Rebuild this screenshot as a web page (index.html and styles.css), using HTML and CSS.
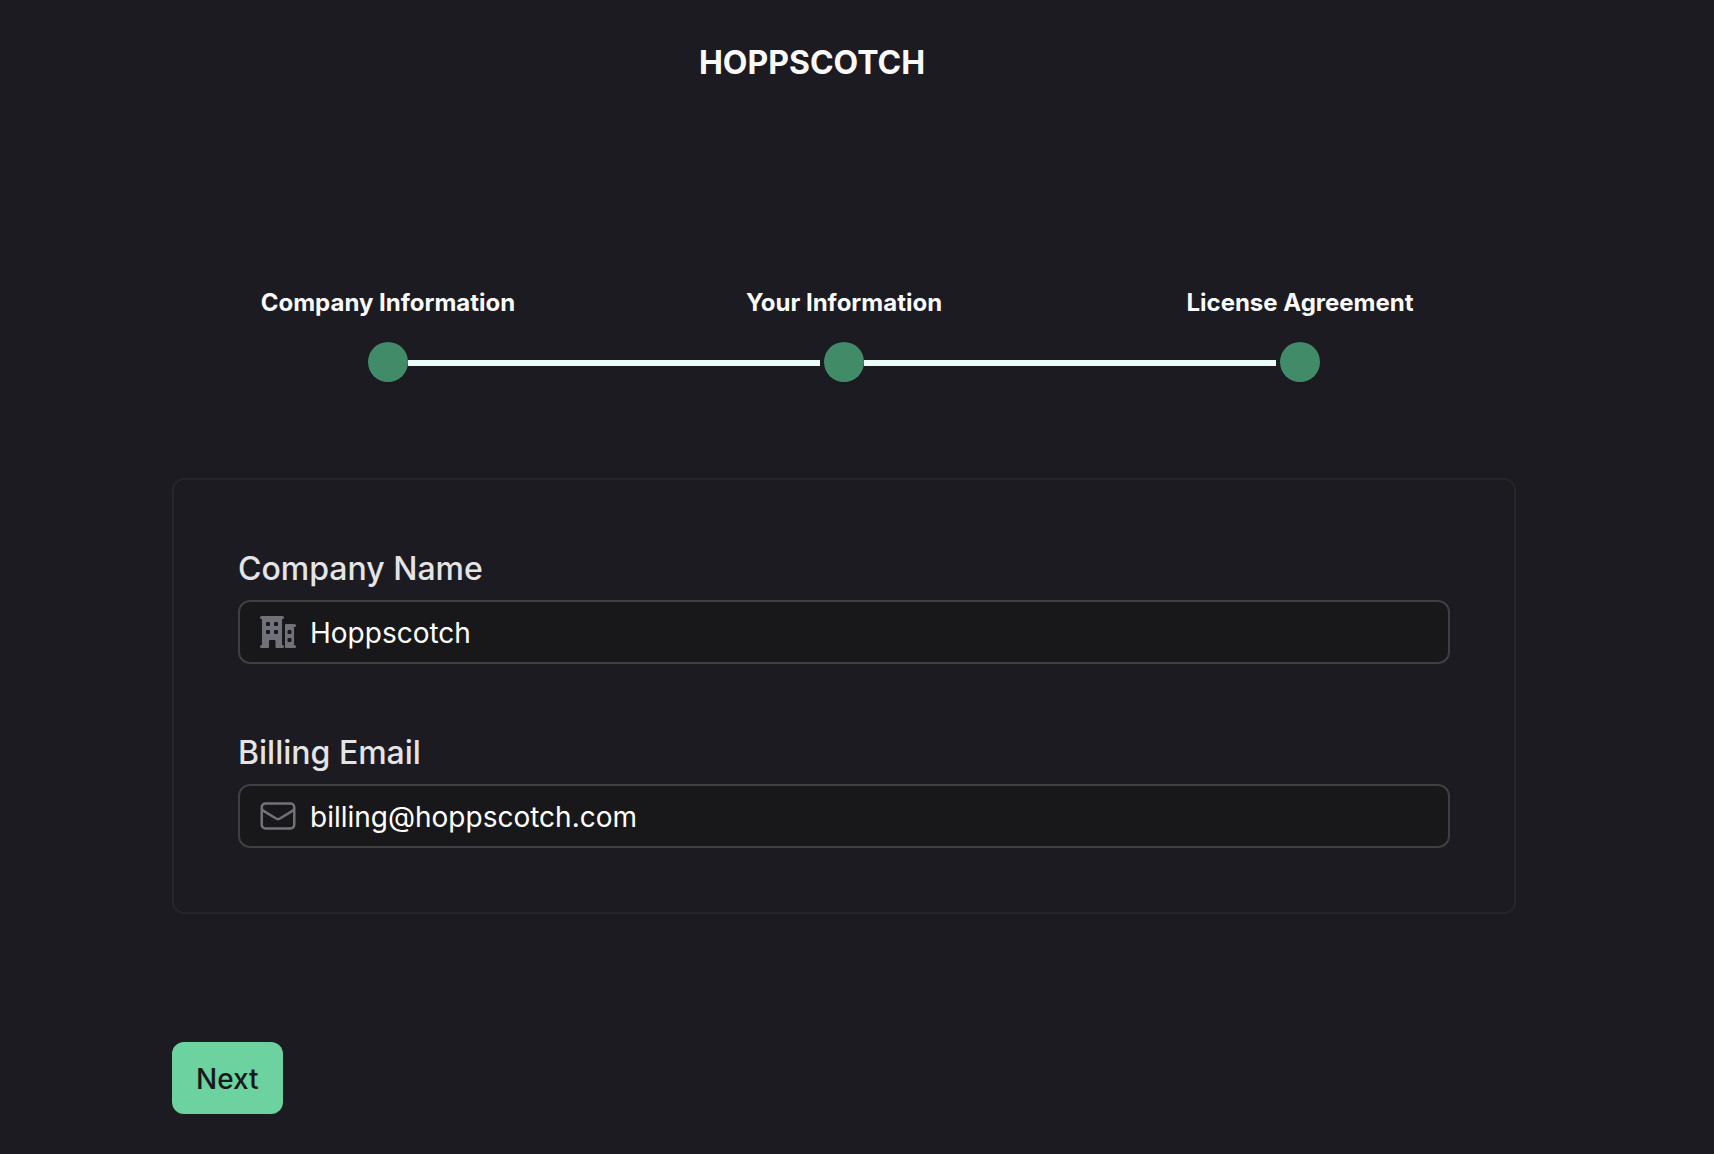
FILE: index.html
```html
<!DOCTYPE html>
<html lang="en">
<head>
<meta charset="utf-8">
<meta name="viewport" content="width=device-width, initial-scale=1">
<title>Hoppscotch</title>
<link rel="stylesheet" href="styles.css">
</head>
<body>
<main class="page">
  <header class="header">
    <h1 class="brand">HOPPSCOTCH</h1>
  </header>

  <ol class="steps">
    <li class="step">
      <span class="step-label">Company Information</span>
      <span class="track"><span class="line hidden"></span><span class="dot"></span><span class="line"></span></span>
    </li>
    <li class="step">
      <span class="step-label">Your Information</span>
      <span class="track"><span class="line before"></span><span class="dot"></span><span class="line"></span></span>
    </li>
    <li class="step">
      <span class="step-label">License Agreement</span>
      <span class="track"><span class="line before"></span><span class="dot"></span><span class="line hidden"></span></span>
    </li>
  </ol>

  <form class="form">
    <div class="card">
      <div class="field">
        <label class="field-label" for="company">Company Name</label>
        <div class="control">
          <svg class="icon" viewBox="0 0 40 40" aria-hidden="true">
            <path fill="currentColor" fill-rule="evenodd" d="M3.500 4H24.500a1.500 1.500 0 0 1 0 3H24V33h.5a1.500 1.500 0 0 1 0 3H18.500a1 1 0 0 1-1-1V29a1 1 0 0 0-1-1H12a1 1 0 0 0-1 1v6a1 1 0 0 1-1 1H3.500a1.500 1.500 0 0 1 0-3H4V7h-.5a1.500 1.500 0 0 1 0-3ZM9 10a1 1 0 0 0-1 1v2a1 1 0 0 0 1 1h2a1 1 0 0 0 1-1v-2a1 1 0 0 0-1-1ZM17 10a1 1 0 0 0-1 1v2a1 1 0 0 0 1 1h2a1 1 0 0 0 1-1v-2a1 1 0 0 0-1-1ZM9 18a1 1 0 0 0-1 1v2a1 1 0 0 0 1 1h2a1 1 0 0 0 1-1v-2a1 1 0 0 0-1-1ZM17 18a1 1 0 0 0-1 1v2a1 1 0 0 0 1 1h2a1 1 0 0 0 1-1v-2a1 1 0 0 0-1-1ZM28 12H36.500a1.500 1.500 0 0 1 0 3H36V33h.5a1.500 1.500 0 0 1 0 3H28a1 1 0 0 1-1-1V13a1 1 0 0 1 1-1ZM30.500 18a1 1 0 0 0-1 1v2a1 1 0 0 0 1 1h2a1 1 0 0 0 1-1v-2a1 1 0 0 0-1-1ZM30.500 26a1 1 0 0 0-1 1v2a1 1 0 0 0 1 1h2a1 1 0 0 0 1-1v-2a1 1 0 0 0-1-1Z"/>
          </svg>
          <input class="input" id="company" type="text" value="Hoppscotch">
        </div>
      </div>
      <div class="field">
        <label class="field-label" for="email">Billing Email</label>
        <div class="control">
          <svg class="icon" viewBox="0 0 24 24" fill="none" stroke="currentColor" stroke-width="1.5" stroke-linecap="round" stroke-linejoin="round" aria-hidden="true">
            <path d="M21.75 6.750v10.500a2.250 2.250 0 0 1-2.250 2.250h-15a2.250 2.250 0 0 1-2.250-2.250V6.750m19.500 0A2.250 2.250 0 0 0 19.500 4.500h-15a2.250 2.250 0 0 0-2.250 2.250m19.500 0v.243a2.250 2.250 0 0 1-1.070 1.916l-7.500 4.615a2.250 2.250 0 0 1-2.360 0L3.320 8.910a2.250 2.250 0 0 1-1.070-1.916V6.750"/>
          </svg>
          <input class="input" id="email" type="email" value="billing@hoppscotch.com">
        </div>
      </div>
    </div>
    <button class="next" type="button">Next</button>
  </form>
</main>
</body>
</html>
```
FILE: styles.css
```css
* {
  box-sizing: border-box;
}

body {
  margin: 0;
  min-height: 100vh;
  background: #1c1b21;
  color: #fafafa;
  font-family: Inter, "Liberation Sans", sans-serif;
}

.page {
  padding: 43px 198px 40px 172px;
}

.header {
  padding-right: 64px;
  text-align: center;
}

.brand {
  margin: 0;
  font-size: 32px;
  line-height: 40px;
  font-weight: 700;
}

.steps {
  display: grid;
  grid-template-columns: repeat(3, 1fr);
  margin: 204px -12px 96px;
  padding: 0;
  list-style: none;
}

.step {
  display: flex;
  flex-direction: column;
  gap: 23px;
}

.step-label {
  font-size: 24px;
  line-height: 32px;
  font-weight: 700;
  text-align: center;
}

.track {
  display: grid;
  grid-template-columns: 1fr 40px 1fr;
  align-items: center;
}

.line {
  height: 8px;
  border-top: 2px solid transparent;
  background: #ecfdf5;
  background-clip: padding-box;
}

.before {
  margin-right: 4px;
}

.hidden {
  visibility: hidden;
}

.dot {
  height: 40px;
  border-radius: 50%;
  background: #418b68;
}

.card {
  display: flex;
  flex-direction: column;
  gap: 64px;
  padding: 64px;
  border: 2px solid #262626;
  border-radius: 12px;
}

.field {
  display: flex;
  flex-direction: column;
  gap: 8px;
}

.field-label {
  padding-top: 2px;
  color: #e4e4e7;
  font-size: 32px;
  line-height: 46px;
  font-weight: 500;
}

.control {
  display: flex;
  align-items: center;
  gap: 12px;
  height: 64px;
  padding: 0 18px;
  border: 2px solid #3f3f46;
  border-radius: 12px;
  background: #18181a;
}

.icon {
  flex: none;
  width: 40px;
  height: 40px;
  color: #71717a;
}

.input {
  flex: 1;
  min-width: 0;
  padding: 2px 0 0;
  border: 0;
  outline: 0;
  background: transparent;
  color: #ffffff;
  font: inherit;
  font-size: 28px;
  line-height: 40px;
}

.next {
  margin-top: 128px;
  padding: 17px 24px 15px;
  border: 0;
  border-radius: 12px;
  background: #6bd2a0;
  color: #18181b;
  font: inherit;
  font-size: 28px;
  line-height: 40px;
  font-weight: 500;
}
```
